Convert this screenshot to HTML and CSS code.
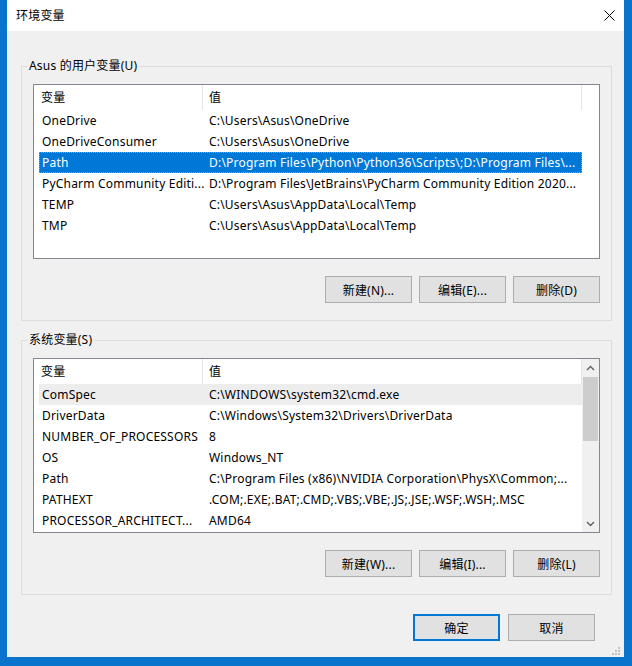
FILE: index.html
```html
<!doctype html>
<html lang="zh-CN">
<head>
  <meta charset="utf-8">
  <title>环境变量</title>
  <link rel="stylesheet" href="styles.css">
</head>
<body>

<div class="window">
  <div class="titlebar">
    <span class="title">环境变量</span>
    <svg class="close" width="11" height="11" viewBox="0 0 11 11">
      <path d="M0.5 0.5 L10.5 10.5 M10.5 0.5 L0.5 10.5" stroke="#000" stroke-width="1" fill="none"/>
    </svg>
  </div>

  <div class="content">

    <fieldset class="group">
      <legend>Asus 的用户变量(U)</legend>
      <div class="listview">
        <div class="lv-main">
          <div class="lv-head">
            <div class="hcell name">变量</div>
            <div class="hcell value">值</div>
          </div>
          <div class="row"><div class="c name">OneDrive</div><div class="c value">C:\Users\Asus\OneDrive</div></div>
          <div class="row"><div class="c name">OneDriveConsumer</div><div class="c value">C:\Users\Asus\OneDrive</div></div>
          <div class="row selected"><div class="c name">Path</div><div class="c value">D:\Program Files\Python\Python36\Scripts\;D:\Program Files\...</div></div>
          <div class="row"><div class="c name">PyCharm Community Editi...</div><div class="c value">D:\Program Files\JetBrains\PyCharm Community Edition 2020...</div></div>
          <div class="row"><div class="c name">TEMP</div><div class="c value">C:\Users\Asus\AppData\Local\Temp</div></div>
          <div class="row"><div class="c name">TMP</div><div class="c value">C:\Users\Asus\AppData\Local\Temp</div></div>
        </div>
        <div class="lv-filler"></div>
      </div>
      <div class="buttons">
        <button class="btn">新建(N)...</button>
        <button class="btn">编辑(E)...</button>
        <button class="btn">删除(D)</button>
      </div>
    </fieldset>

    <fieldset class="group">
      <legend>系统变量(S)</legend>
      <div class="listview">
        <div class="lv-main">
          <div class="lv-head">
            <div class="hcell name">变量</div>
            <div class="hcell value">值</div>
          </div>
          <div class="row hot"><div class="c name">ComSpec</div><div class="c value">C:\WINDOWS\system32\cmd.exe</div></div>
          <div class="row"><div class="c name">DriverData</div><div class="c value">C:\Windows\System32\Drivers\DriverData</div></div>
          <div class="row"><div class="c name">NUMBER_OF_PROCESSORS</div><div class="c value">8</div></div>
          <div class="row"><div class="c name">OS</div><div class="c value">Windows_NT</div></div>
          <div class="row"><div class="c name">Path</div><div class="c value">C:\Program Files (x86)\NVIDIA Corporation\PhysX\Common;...</div></div>
          <div class="row"><div class="c name">PATHEXT</div><div class="c value">.COM;.EXE;.BAT;.CMD;.VBS;.VBE;.JS;.JSE;.WSF;.WSH;.MSC</div></div>
          <div class="row"><div class="c name">PROCESSOR_ARCHITECT...</div><div class="c value">AMD64</div></div>
        </div>
        <div class="scrollbar">
          <div class="sb-btn">
            <svg width="9" height="6" viewBox="0 0 9 6"><path d="M1 5 L4.5 1.5 L8 5" stroke="#606060" stroke-width="1.4" fill="none"/></svg>
          </div>
          <div class="sb-track"><div class="sb-thumb"></div></div>
          <div class="sb-btn">
            <svg width="9" height="6" viewBox="0 0 9 6"><path d="M1 1 L4.5 4.5 L8 1" stroke="#606060" stroke-width="1.4" fill="none"/></svg>
          </div>
        </div>
      </div>
      <div class="buttons">
        <button class="btn">新建(W)...</button>
        <button class="btn">编辑(I)...</button>
        <button class="btn">删除(L)</button>
      </div>
    </fieldset>

    <div class="dialog-buttons">
      <button class="btn default">确定</button>
      <button class="btn">取消</button>
    </div>
  </div>

  <svg class="grip" width="9" height="9" viewBox="0 0 9 9">
    <rect x="6" y="0" width="2" height="2" fill="#c3c3c3"/>
    <rect x="3" y="3" width="2" height="2" fill="#c3c3c3"/>
    <rect x="6" y="3" width="2" height="2" fill="#c3c3c3"/>
    <rect x="0" y="6" width="2" height="2" fill="#c3c3c3"/>
    <rect x="3" y="6" width="2" height="2" fill="#c3c3c3"/>
    <rect x="6" y="6" width="2" height="2" fill="#c3c3c3"/>
  </svg>
</div>

</body>
</html>
```

FILE: styles.css
```css
body {
  margin: 0;
  background: #0a73cc;
  font-family: "Noto Sans", "Noto Sans CJK SC", sans-serif;
  font-size: 12px;
  letter-spacing: 0.2px;
  color: #000;
}

.window {
  position: relative;
  margin-left: 7px;
  width: 617px;
  height: 657px;
  background: #f0f0f0;
}

.titlebar {
  height: 31px;
  background: #fff;
  display: flex;
  align-items: center;
  justify-content: space-between;
  padding: 0 9px 0 9px;
}
.title {
  line-height: 16px;
}

.content {
  padding: 27px 12px 0 14px;
}

/* group boxes */
.group {
  margin: 0;
  min-width: 0;
  border: 1px solid #dcdcdc;
  padding: 10px 11px 17px 11px;
}
.group + .group {
  margin-top: 11px;
}
.group legend {
  padding: 0 2px;
  margin-left: -6px;
  line-height: 16px;
}

/* list views */
.listview {
  box-sizing: border-box;
  height: 175px;
  border: 1px solid #828790;
  background: #fff;
  display: flex;
}
.lv-main {
  flex: 1;
  overflow: hidden;
}
.lv-filler {
  width: 17px;
}
.lv-head {
  display: flex;
  height: 25px;
}
.hcell {
  box-sizing: border-box;
  line-height: 25px;
  border-right: 1px solid #e5e5e5;
}
.hcell.name {
  width: 169px;
  padding-left: 7px;
}
.hcell.value {
  flex: 1;
  padding-left: 6px;
}

.row {
  display: flex;
  height: 21px;
  line-height: 21px;
  margin-left: 5px;
  white-space: nowrap;
}
.row .c {
  overflow: hidden;
  padding-left: 3px;
}
.row .name {
  box-sizing: border-box;
  width: 167px;
  flex-shrink: 0;
}
.row .value {
  flex: 1;
}
.row.selected {
  background: #0078d7;
  color: #fff;
  outline: 1px dotted #ff8a2a;
  outline-offset: -1px;
}
.row.hot {
  background: #ededed;
}

/* scroll bar */
.scrollbar {
  width: 17px;
  background: #f0f0f0;
  display: flex;
  flex-direction: column;
}
.sb-btn {
  height: 17px;
  display: flex;
  align-items: center;
  justify-content: center;
}
.sb-track {
  flex: 1;
  padding-top: 1px;
}
.sb-thumb {
  height: 64px;
  margin: 0 1px;
  background: #cdcdcd;
}

/* buttons */
.buttons {
  display: flex;
  justify-content: flex-end;
  gap: 7px;
  margin-top: 17px;
}
.btn {
  box-sizing: border-box;
  width: 87px;
  height: 27px;
  margin: 0;
  padding: 0;
  background: #e1e1e1;
  border: 1px solid #adadad;
  font-family: "Noto Sans", "Noto Sans CJK SC", sans-serif;
  font-size: 12px;
  letter-spacing: 0.2px;
  color: #000;
}
.btn.default {
  border: 2px solid #0078d7;
}

.dialog-buttons {
  display: flex;
  justify-content: flex-end;
  gap: 8px;
  margin-top: 19px;
  padding-right: 17px;
}

.grip {
  position: absolute;
  right: 3px;
  bottom: 1px;
}
```
